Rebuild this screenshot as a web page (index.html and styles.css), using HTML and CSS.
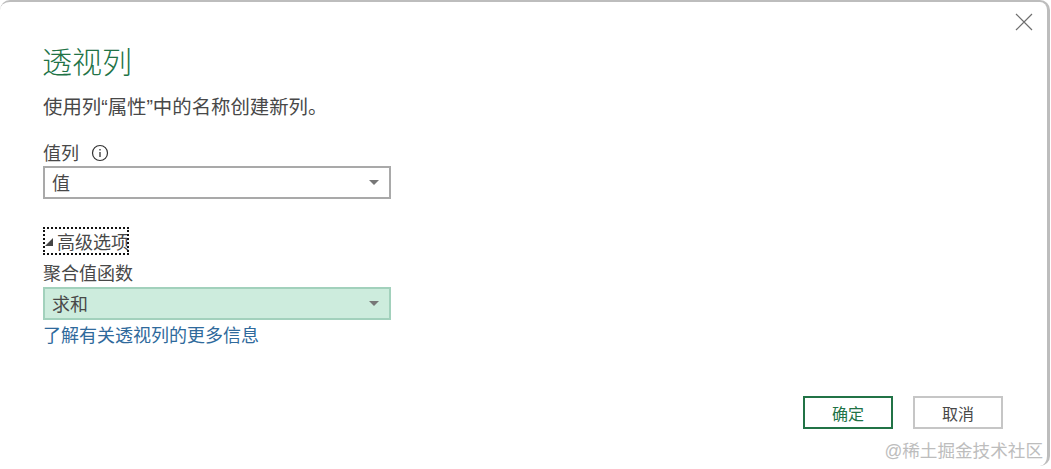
FILE: index.html
```html
<!DOCTYPE html>
<html>
  <head>
    <title>透视列</title>
    <link rel="stylesheet" href="styles.css">
  </head>
  <body>
    <div class="dialog">
      <div class="closeRow">
        <svg class="closeIcon" width="18" height="18" viewBox="0 0 18 18">
          <path d="M1 1L17 17M17 1L1 17" stroke="#6e6e6e" stroke-width="1.2" fill="none"/>
        </svg>
      </div>
      <h1 class="title">透视列</h1>
      <p class="desc">使用列“属性”中的名称创建新列。</p>

      <div class="fieldLabel">
        值列
        <svg class="infoIcon" width="18" height="18" viewBox="0 0 18 18">
          <circle cx="9" cy="9" r="7.5" stroke="#333" stroke-width="1.2" fill="none"/>
          <path d="M9 8V13" stroke="#333" stroke-width="1.3"/>
          <path d="M9 5V6.4" stroke="#333" stroke-width="1.3"/>
        </svg>
      </div>
      <div class="select">
        <span>值</span>
        <i class="arrow"></i>
      </div>

      <div class="advanced">
        <span class="advancedToggle"><i class="corner"></i>高级选项</span>
      </div>
      <div class="fieldLabel2">聚合值函数</div>
      <div class="select selectActive">
        <span>求和</span>
        <i class="arrow"></i>
      </div>
      <a class="moreLink" href="#">了解有关透视列的更多信息</a>

      <div class="buttons">
        <button class="btn btnOk">确定</button>
        <button class="btn">取消</button>
      </div>
    </div>
    <div class="watermark">@稀土掘金技术社区</div>
  </body>
</html>
```

FILE: styles.css
```css
html, body{
    margin:0;
    height:100%;
}

body{
    background:#fff;
    overflow:hidden;
    font-family:"Liberation Sans","Noto Sans CJK SC",sans-serif;
    font-size:18px;
    color:#484848;
}

.dialog{
    box-sizing:border-box;
    display:flex;
    flex-direction:column;
    align-items:flex-start;
    width:1050px;
    height:466px;
    padding:0 44px 37px 43px;
    background:#fff;
    border-top:2px solid #bdbdbd;
    border-right:3px solid #bdbdbd;
    border-radius:10px;
}

.closeRow{
    align-self:stretch;
    display:flex;
    justify-content:flex-end;
    height:24px;
    margin-right:-30px;
    padding-top:11px;
}

.title{
    margin:0;
    height:52px;
    font-size:30px;
    font-weight:300;
    line-height:52px;
    color:#217346;
    text-indent:-1px;
}

.desc{
    margin:5px 0 0 0;
    font-size:19.4px;
    line-height:26px;
}

.fieldLabel{
    display:flex;
    align-items:center;
    margin-top:19px;
    height:26px;
}

.infoIcon{
    margin:2px 0 0 12px;
}

.select{
    box-sizing:border-box;
    display:flex;
    align-items:center;
    justify-content:space-between;
    width:348px;
    height:33px;
    padding:0 10px 2px 7px;
    border:2px solid #a9a9a9;
    background:#fff;
    margin-top:1px;
}

.selectActive{
    background:#cdecdd;
    border-color:#a2d1bc;
    margin-top:0;
}

.arrow{
    width:0;
    height:0;
    margin-top:2px;
    border-left:5px solid transparent;
    border-right:5px solid transparent;
    border-top:5px solid #777;
}

.advanced{
    margin-top:28px;
}

.advancedToggle{
    display:flex;
    align-items:center;
    box-sizing:border-box;
    width:86px;
    height:28px;
    outline:2px dotted #111;
    outline-offset:-2px;
    white-space:nowrap;
}

.corner{
    width:0;
    height:0;
    margin:2px 4px 0 2px;
    border-left:8px solid transparent;
    border-bottom:8px solid #444;
}

.fieldLabel2{
    margin-top:6px;
    line-height:26px;
}

.moreLink{
    margin-top:3px;
    line-height:26px;
    color:#2f6a9c;
    text-decoration:none;
}

.buttons{
    display:flex;
    gap:20px;
    margin-top:auto;
    align-self:flex-end;
}

.btn{
    box-sizing:border-box;
    width:90px;
    height:33px;
    padding:0;
    background:#fff;
    border:2px solid #c6c6c6;
    font-family:"Liberation Sans","Noto Sans CJK SC",sans-serif;
    font-size:16px;
    color:#484848;
}

.btnOk{
    border-color:#217346;
    color:#217346;
}

.watermark{
    position:absolute;
    right:8px;
    bottom:8px;
    font-size:17.6px;
    line-height:20px;
    color:#bdbdbd;
}
```
